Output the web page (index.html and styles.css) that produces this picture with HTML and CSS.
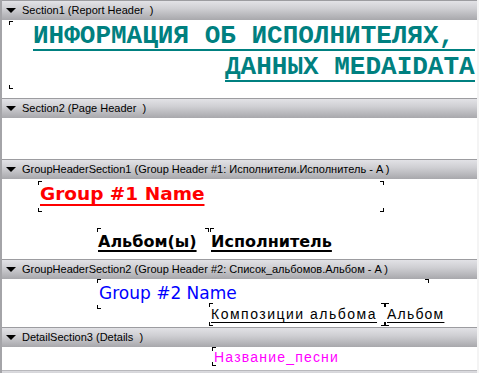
FILE: index.html
```html
<!DOCTYPE html>
<html lang="ru">
<head>
    <meta charset="UTF-8">
    <title>Report Designer</title>
    <link rel="stylesheet" href="styles.css">
</head>
<body>
    <div class="designer">
        <div class="bar"><span class="tri"></span>Section1 (Report Header&nbsp; )</div>
        <div class="sec sec-report">
            <div class="fld f-title">
                <span class="mk tl"></span><span class="mk bl"></span>
                <div class="t1">ИНФОРМАЦИЯ ОБ ИСПОЛНИТЕЛЯХ,</div>
                <div class="t2">ДАННЫХ MEDAIDATA</div>
            </div>
        </div>

        <div class="bar"><span class="tri"></span>Section2 (Page Header&nbsp; )</div>
        <div class="sec sec-page"></div>

        <div class="bar"><span class="tri"></span>GroupHeaderSection1 (Group Header #1: Исполнители.Исполнитель - A )</div>
        <div class="sec sec-g1">
            <div class="fld f-g1">
                <span class="mk tl"></span><span class="mk tr"></span><span class="mk bl"></span><span class="mk br"></span>
                <span class="g1">Group #1 Name</span>
            </div>
            <div class="fld f-alb">
                <span class="mk tl"></span><span class="mk tr"></span>
                <span class="cap">Альбом(ы)</span>
            </div>
            <div class="fld f-isp">
                <span class="mk tl"></span>
                <span class="cap">Исполнитель</span>
            </div>
        </div>

        <div class="bar"><span class="tri"></span>GroupHeaderSection2 (Group Header #2: Список_альбомов.Альбом - A )</div>
        <div class="sec sec-g2">
            <div class="fld f-g2">
                <span class="mk tl"></span><span class="mk tr"></span><span class="mk bl"></span>
                <span class="g2">Group #2 Name</span>
            </div>
            <div class="fld f-komp">
                <span class="mk tl"></span><span class="mk bl"></span>
                <span class="thin">Композиции альбома</span>
            </div>
            <div class="fld f-albom">
                <span class="mk tl"></span><span class="mk bl"></span><span class="mk tlx"></span><span class="mk blx"></span>
                <span class="thin">Альбом</span>
            </div>
        </div>

        <div class="bar"><span class="tri"></span>DetailSection3 (Details&nbsp; )</div>
        <div class="sec sec-det">
            <div class="fld f-song">
                <span class="mk tl"></span><span class="mk bl"></span>
                <span class="song">Название_песни</span>
            </div>
        </div>

        <div class="bar bar-end"></div>
    </div>
</body>
</html>
```

FILE: styles.css
```css
body {
    margin: 0;
    background: #f4f4f4;
    font-family: "Liberation Sans", Arial, sans-serif;
    overflow: hidden;
}
.designer {
    width: 477px;
    background: white;
    border-left: 2px solid #a4a4a8;
    box-sizing: border-box;
}
.bar {
    height: 20px;
    box-sizing: border-box;
    border-top: 1px solid #9c9ca0;
    background: linear-gradient(#e2e2e6, #cfcfd3 40%, #a8a8ac);
    font-size: 11px;
    line-height: 19px;
    color: black;
    white-space: nowrap;
    overflow: hidden;
    padding-left: 4px;
}
.bar-end {
    height: 8px;
    background: linear-gradient(#dcdce0, #c4c4c8);
    border-top: 1px solid #b8b8bc;
}
.tri {
    display: inline-block;
    width: 0;
    height: 0;
    border-left: 5px solid transparent;
    border-right: 5px solid transparent;
    border-top: 5px solid black;
    margin-right: 6px;
    vertical-align: 1px;
}
.sec {
    position: relative;
    overflow: hidden;
}
.sec-report { height: 78px; }
.sec-page { height: 41px; }
.sec-g1 { height: 80px; }
.sec-g2 { height: 48px; }
.sec-det { height: 23px; }

/* controls on the design surface */
.fld {
    position: absolute;
    white-space: nowrap;
}
.mk {
    position: absolute;
    width: 3px;
    height: 3px;
}
.mk.tl { left: 0; top: 0; border-left: 1px solid black; border-top: 1px solid black; }
.mk.tr { right: 0; top: 0; border-right: 1px solid black; border-top: 1px solid black; }
.mk.bl { left: 0; bottom: 0; border-left: 1px solid black; border-bottom: 1px solid black; }
.mk.br { right: 0; bottom: 0; border-right: 1px solid black; border-bottom: 1px solid black; }
.mk.tlx { left: -4px; top: 0; border-right: 1px solid black; border-top: 1px solid black; }
.mk.blx { left: -4px; bottom: 0; border-right: 1px solid black; border-bottom: 1px solid black; }

.f-title {
    left: 7px;
    top: 1px;
    width: 466px;
    height: 68px;
    font-family: "Liberation Mono", "Courier New", monospace;
    font-weight: bold;
    font-size: 26px;
    line-height: 31px;
    color: #008080;
}
.t1, .t2 {
    height: 28px;
    border-bottom: 2px solid #008080;
    margin-bottom: 1px;
}
.t1 { margin-left: 24px; }
.t2 { margin-left: 216px; }

.f-g1 { left: 36px; top: 2px; width: 346px; height: 31px; }
.g1 {
    display: block;
    padding-left: 2px;
    font-family: "DejaVu Sans", sans-serif;
    font-weight: bold;
    font-size: 18.5px;
    line-height: 26px;
    color: #ff0000;
    text-decoration: underline;
    text-decoration-thickness: 2px;
    text-underline-offset: 4px;
}
.f-alb { left: 95px; top: 49px; width: 112px; height: 28px; }
.f-isp { left: 208px; top: 49px; width: 180px; height: 28px; }
.cap {
    display: block;
    padding: 4px 0 0 1px;
    font-family: "DejaVu Sans", sans-serif;
    font-weight: bold;
    font-size: 16px;
    line-height: 20px;
    color: black;
    text-decoration: underline;
    text-decoration-thickness: 2px;
    text-underline-offset: 3px;
}

.f-g2 { left: 95px; top: 0; width: 332px; height: 30px; }
.g2 {
    display: block;
    padding: 3px 0 0 2px;
    font-family: "DejaVu Sans", sans-serif;
    font-size: 17px;
    line-height: 22px;
    color: #0000ff;
}
.f-komp { left: 207px; top: 24px; width: 174px; height: 23px; }
.f-albom { left: 383px; top: 24px; width: 66px; height: 23px; }
.thin {
    display: block;
    padding: 3px 0 0 2px;
    font-size: 14px;
    line-height: 16px;
    letter-spacing: 1.5px;
    color: black;
    text-decoration: underline;
    text-underline-offset: 3px;
}
.f-albom .thin { letter-spacing: 1.2px; }
.f-song { left: 210px; top: 0; width: 200px; height: 19px; }
.song {
    display: block;
    padding: 2px 0 0 2px;
    font-size: 14px;
    line-height: 16px;
    letter-spacing: 1.2px;
    color: #ff00ff;
}
```
